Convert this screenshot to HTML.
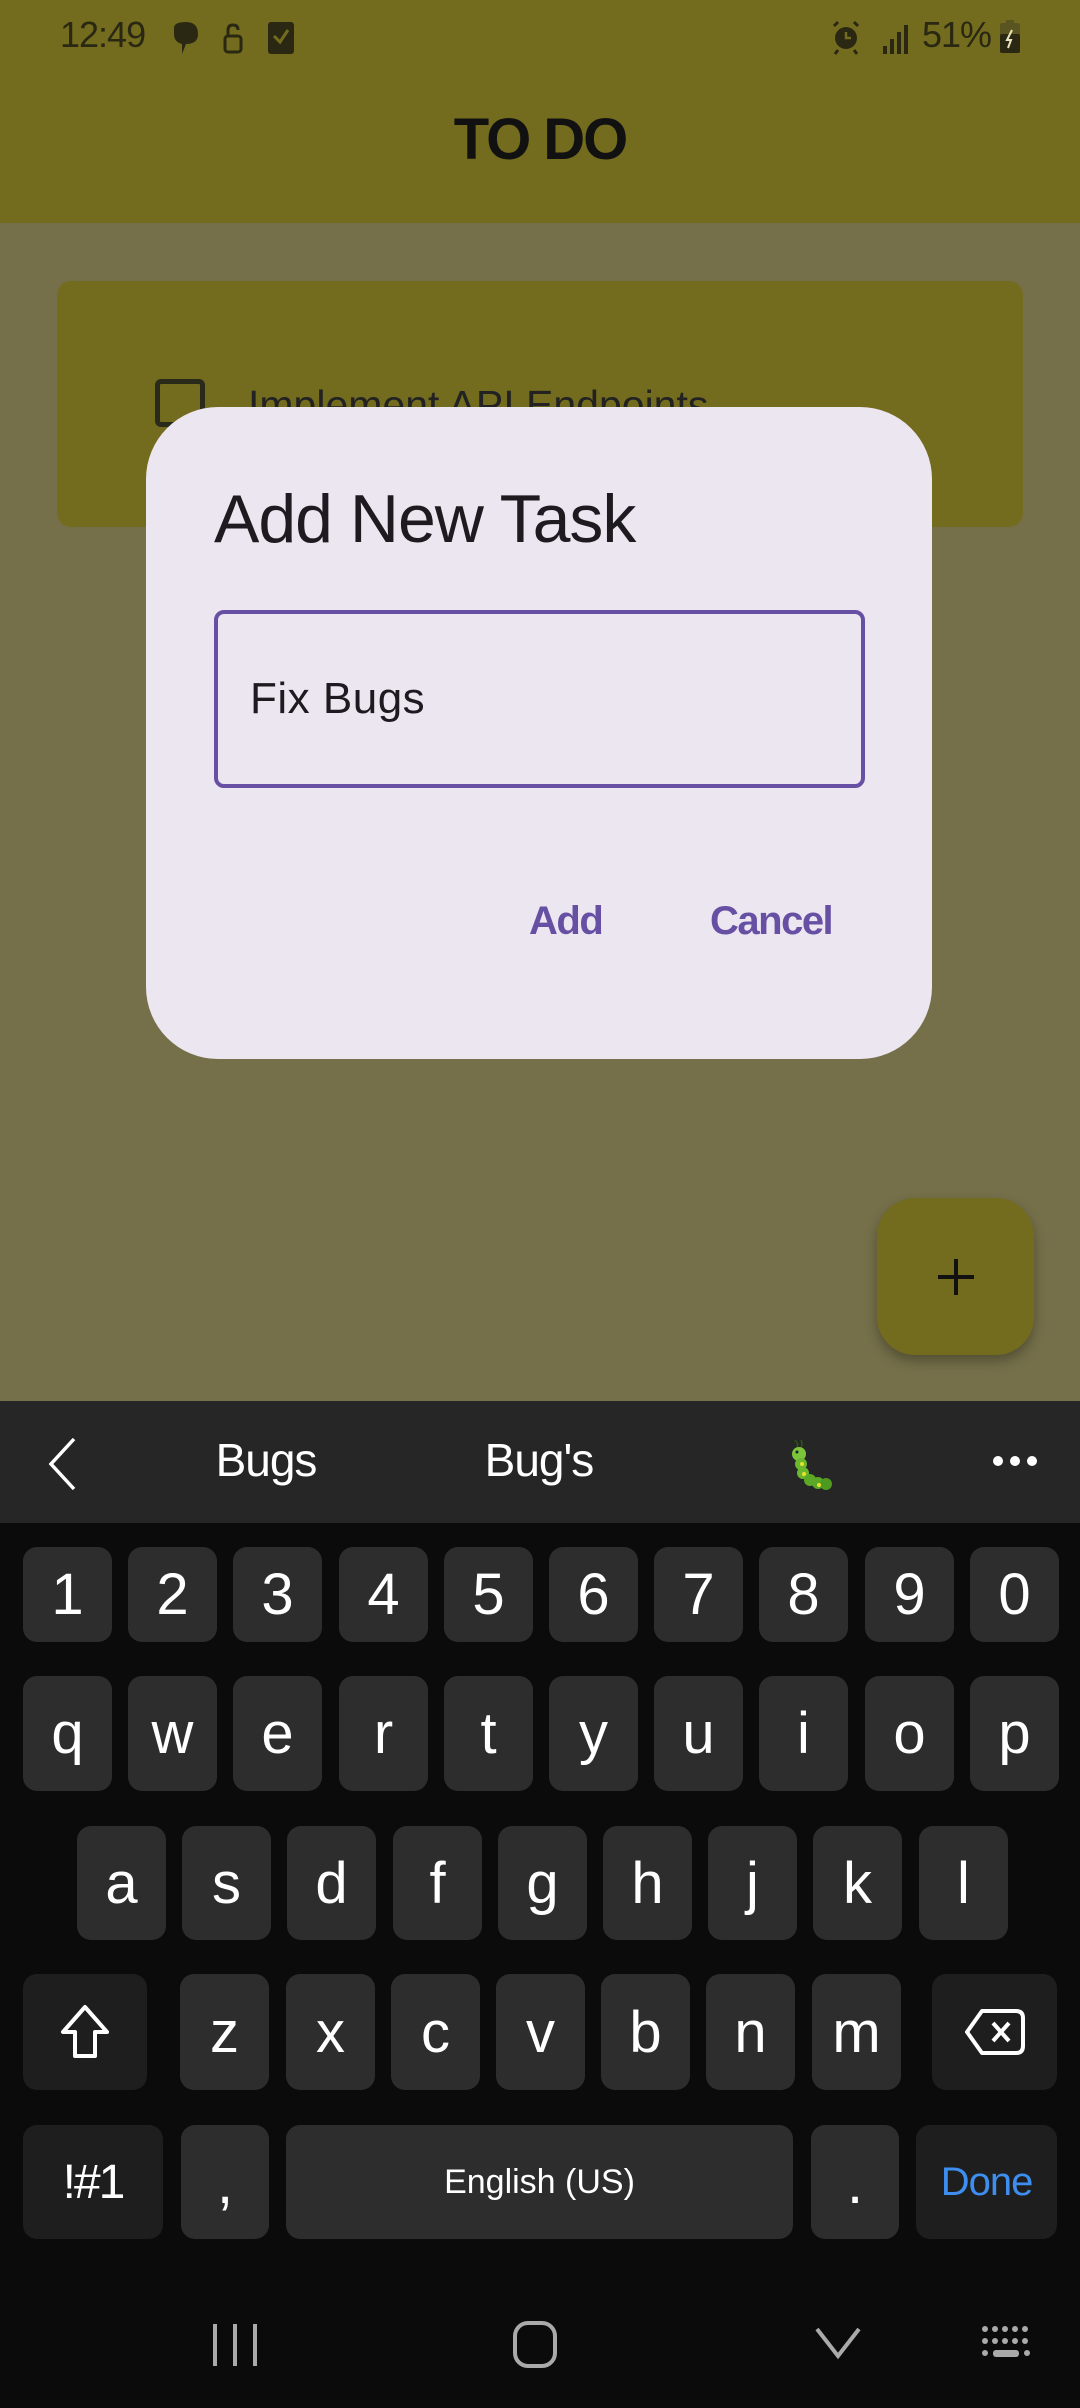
<!DOCTYPE html>
<html><head><meta charset="utf-8"><style>
*{margin:0;padding:0;box-sizing:border-box}
body{width:1080px;height:2408px;position:relative;overflow:hidden;background:#75704A;font-family:"Liberation Sans",sans-serif}
.a{position:absolute}
.k{position:absolute;background:#2D2D2D;border-radius:14px;color:#fff;display:flex;align-items:center;justify-content:center;font-size:58px;height:95px}
.s{background:#1E1E1E}
</style></head><body>
<div class="a" style="left:0;top:0;width:1080px;height:223px;background:#736B1E"></div>
<div class="a" style="left:60px;top:14px;font-size:36px;color:#2a2812;letter-spacing:-1px">12:49</div>
<svg class="a" style="left:170px;top:20px" width="180" height="40" viewBox="0 0 180 40">
<path d="M4 8 Q4 2 16 2 Q28 2 28 14 Q28 24 16 24 L12 34 L12 24 Q4 22 4 14Z" fill="#2a2812"/>
<rect x="55" y="16" width="16" height="16" rx="3" fill="none" stroke="#2a2812" stroke-width="3"/>
<path d="M58 16 V10 Q58 5 63 5 Q68 5 68 10" fill="none" stroke="#2a2812" stroke-width="3"/>
<rect x="98" y="2" width="26" height="32" rx="3" fill="#2a2812"/>
<path d="M104 16 L110 22 L118 10" fill="none" stroke="#736B1E" stroke-width="3"/>
</svg>
<svg class="a" style="left:828px;top:20px" width="90" height="36" viewBox="0 0 90 36">
<circle cx="18" cy="18" r="11" fill="#2a2812"/><path d="M18 12 V18 H23" stroke="#736B1E" stroke-width="2.5" fill="none"/>
<path d="M6 6 L10 2 M30 6 L26 2 M10 30 L7 34 M26 30 L29 34" stroke="#2a2812" stroke-width="3"/>
<rect x="55" y="26" width="4" height="8" fill="#2a2812"/><rect x="62" y="19" width="4" height="15" fill="#2a2812"/><rect x="69" y="12" width="4" height="22" fill="#2a2812"/><rect x="76" y="5" width="4" height="29" fill="#2a2812"/>
</svg>
<div class="a" style="left:922px;top:14px;font-size:36px;color:#2a2812;letter-spacing:-1px">51%</div>
<svg class="a" style="left:999px;top:20px" width="24" height="34" viewBox="0 0 24 34"><rect x="7" y="0" width="8" height="4" fill="#5a5520"/><rect x="1" y="3" width="20" height="30" rx="2" fill="#5a5520"/><rect x="1" y="14" width="20" height="19" rx="2" fill="#2a2812"/><path d="M13 10 L8 20 H12 L9 28" stroke="#e8e4c0" stroke-width="2" fill="none"/></svg>
<div class="a" style="left:0;width:1080px;top:106px;text-align:center;font-size:58px;font-weight:bold;color:#111;letter-spacing:-2px">TO DO</div>

<div class="a" style="left:57px;top:281px;width:966px;height:246px;background:#736B1E;border-radius:14px"></div>
<div class="a" style="left:155px;top:379px;width:50px;height:48px;border:5px solid #2a2a1a;border-radius:6px"></div>
<div class="a" style="left:248px;top:382px;font-size:41px;color:#222">Implement API Endpoints</div>

<div class="a" style="left:146px;top:407px;width:786px;height:652px;background:#ECE6F0;border-radius:72px"></div>
<div class="a" style="left:214px;top:480px;font-size:68px;color:#1D1B20;letter-spacing:-1px">Add New Task</div>
<div class="a" style="left:214px;top:610px;width:651px;height:178px;border:4px solid #6750A4;border-radius:10px"></div>
<div class="a" style="left:250px;top:674px;font-size:44px;color:#1D1B20;letter-spacing:0.5px">Fix Bugs</div>
<div class="a" style="left:529px;top:899px;font-size:40px;font-weight:bold;color:#6750A4;letter-spacing:-1.5px">Add</div>
<div class="a" style="left:710px;top:899px;font-size:40px;font-weight:bold;color:#6750A4;letter-spacing:-1.5px">Cancel</div>

<div class="a" style="left:877px;top:1198px;width:157px;height:157px;background:#736B1E;border-radius:38px;box-shadow:0 6px 12px rgba(0,0,0,0.3)"></div>
<svg class="a" style="left:936px;top:1257px" width="40" height="40"><path d="M20 2 V38 M2 20 H38" stroke="#111" stroke-width="4"/></svg>

<div class="a" style="left:0;top:1401px;width:1080px;height:1007px;background:#0B0B0B"></div>
<div class="a" style="left:0;top:1401px;width:1080px;height:122px;background:#262626"></div>
<svg class="a" style="left:46px;top:1436px" width="32" height="56"><path d="M28 3 L5 28 L28 53" stroke="#fff" stroke-width="3.5" fill="none"/></svg>
<div class="a" style="left:166px;width:200px;top:1433px;text-align:center;font-size:46px;color:#fff;letter-spacing:-1px">Bugs</div>
<div class="a" style="left:439px;width:200px;top:1433px;text-align:center;font-size:46px;color:#fff;letter-spacing:-1px">Bug's</div>
<svg class="a" style="left:785px;top:1438px" width="52" height="56" viewBox="0 0 52 56">
<path d="M10 2 Q14 6 12 10 M16 2 Q18 6 16 10" stroke="#2a5a10" stroke-width="1.5" fill="none"/>
<circle cx="14" cy="16" r="7" fill="#7cc43a"/><circle cx="16" cy="26" r="6" fill="#6ab82e"/><circle cx="18" cy="35" r="6" fill="#6ab82e"/><circle cx="25" cy="42" r="6" fill="#5aa826"/><circle cx="33" cy="45" r="6" fill="#5aa826"/><circle cx="41" cy="46" r="6" fill="#4e9a20"/>
<circle cx="17" cy="26" r="2" fill="#e8e030"/><circle cx="19" cy="36" r="2" fill="#e8e030"/><circle cx="34" cy="47" r="2" fill="#e8e030"/><circle cx="12" cy="14" r="1.5" fill="#123"/>
</svg>
<svg class="a" style="left:992px;top:1454px" width="46" height="14"><circle cx="6" cy="7" r="5" fill="#fff"/><circle cx="23" cy="7" r="5" fill="#fff"/><circle cx="40" cy="7" r="5" fill="#fff"/></svg>

<div class="k" style="left:23px;top:1547px;width:89px">1</div>
<div class="k" style="left:128px;top:1547px;width:89px">2</div>
<div class="k" style="left:233px;top:1547px;width:89px">3</div>
<div class="k" style="left:339px;top:1547px;width:89px">4</div>
<div class="k" style="left:444px;top:1547px;width:89px">5</div>
<div class="k" style="left:549px;top:1547px;width:89px">6</div>
<div class="k" style="left:654px;top:1547px;width:89px">7</div>
<div class="k" style="left:759px;top:1547px;width:89px">8</div>
<div class="k" style="left:865px;top:1547px;width:89px">9</div>
<div class="k" style="left:970px;top:1547px;width:89px">0</div>

<div class="k" style="left:23px;top:1676px;width:89px;height:115px">q</div>
<div class="k" style="left:128px;top:1676px;width:89px;height:115px">w</div>
<div class="k" style="left:233px;top:1676px;width:89px;height:115px">e</div>
<div class="k" style="left:339px;top:1676px;width:89px;height:115px">r</div>
<div class="k" style="left:444px;top:1676px;width:89px;height:115px">t</div>
<div class="k" style="left:549px;top:1676px;width:89px;height:115px">y</div>
<div class="k" style="left:654px;top:1676px;width:89px;height:115px">u</div>
<div class="k" style="left:759px;top:1676px;width:89px;height:115px">i</div>
<div class="k" style="left:865px;top:1676px;width:89px;height:115px">o</div>
<div class="k" style="left:970px;top:1676px;width:89px;height:115px">p</div>

<div class="k" style="left:77px;top:1826px;width:89px;height:114px">a</div>
<div class="k" style="left:182px;top:1826px;width:89px;height:114px">s</div>
<div class="k" style="left:287px;top:1826px;width:89px;height:114px">d</div>
<div class="k" style="left:393px;top:1826px;width:89px;height:114px">f</div>
<div class="k" style="left:498px;top:1826px;width:89px;height:114px">g</div>
<div class="k" style="left:603px;top:1826px;width:89px;height:114px">h</div>
<div class="k" style="left:708px;top:1826px;width:89px;height:114px">j</div>
<div class="k" style="left:813px;top:1826px;width:89px;height:114px">k</div>
<div class="k" style="left:919px;top:1826px;width:89px;height:114px">l</div>

<div class="k s" style="left:23px;top:1974px;width:124px;height:116px"><svg width="52" height="56" viewBox="0 0 52 56"><path d="M26 3 L4 28 H16 V52 H36 V28 H48 Z" fill="none" stroke="#fff" stroke-width="4" stroke-linejoin="round"/></svg></div>
<div class="k" style="left:180px;top:1974px;width:89px;height:116px">z</div>
<div class="k" style="left:286px;top:1974px;width:89px;height:116px">x</div>
<div class="k" style="left:391px;top:1974px;width:89px;height:116px">c</div>
<div class="k" style="left:496px;top:1974px;width:89px;height:116px">v</div>
<div class="k" style="left:601px;top:1974px;width:89px;height:116px">b</div>
<div class="k" style="left:706px;top:1974px;width:89px;height:116px">n</div>
<div class="k" style="left:812px;top:1974px;width:89px;height:116px">m</div>
<div class="k s" style="left:932px;top:1974px;width:125px;height:116px"><svg width="62" height="48" viewBox="0 0 62 48"><path d="M18 3 H52 Q59 3 59 10 V38 Q59 45 52 45 H18 L3 24 Z" fill="none" stroke="#fff" stroke-width="4" stroke-linejoin="round"/><path d="M29 15 L45 33 M45 15 L29 33" stroke="#fff" stroke-width="4"/></svg></div>

<div class="k s" style="left:23px;top:2125px;width:140px;height:114px;font-size:48px;letter-spacing:-2px">!#1</div>
<div class="k" style="left:181px;top:2125px;width:88px;height:114px;align-items:flex-end;padding-bottom:22px">,</div>
<div class="k" style="left:286px;top:2125px;width:507px;height:114px;font-size:34px">English (US)</div>
<div class="k" style="left:811px;top:2125px;width:88px;height:114px;align-items:flex-end;padding-bottom:22px">.</div>
<div class="k s" style="left:916px;top:2125px;width:141px;height:114px;font-size:40px;color:#3E8EF0;letter-spacing:-1px">Done</div>

<svg class="a" style="left:210px;top:2320px" width="50" height="50"><path d="M5 4 V46 M25 4 V46 M45 4 V46" stroke="#aaa" stroke-width="4"/></svg>
<svg class="a" style="left:512px;top:2320px" width="48" height="50"><rect x="3" y="3" width="40" height="43" rx="13" fill="none" stroke="#aaa" stroke-width="4"/></svg>
<svg class="a" style="left:814px;top:2326px" width="48" height="36"><path d="M3 3 L24 30 L45 3" fill="none" stroke="#aaa" stroke-width="4"/></svg>
<svg class="a" style="left:982px;top:2326px" width="54" height="36"><g fill="#aaa"><circle cx="3" cy="3" r="3"/><circle cx="13" cy="3" r="3"/><circle cx="23" cy="3" r="3"/><circle cx="33" cy="3" r="3"/><circle cx="43" cy="3" r="3"/><circle cx="3" cy="15" r="3"/><circle cx="13" cy="15" r="3"/><circle cx="23" cy="15" r="3"/><circle cx="33" cy="15" r="3"/><circle cx="43" cy="15" r="3"/><circle cx="3" cy="27" r="3"/><rect x="11" y="24" width="26" height="7" rx="3"/><circle cx="45" cy="27" r="3"/></g></svg>
</body></html>
